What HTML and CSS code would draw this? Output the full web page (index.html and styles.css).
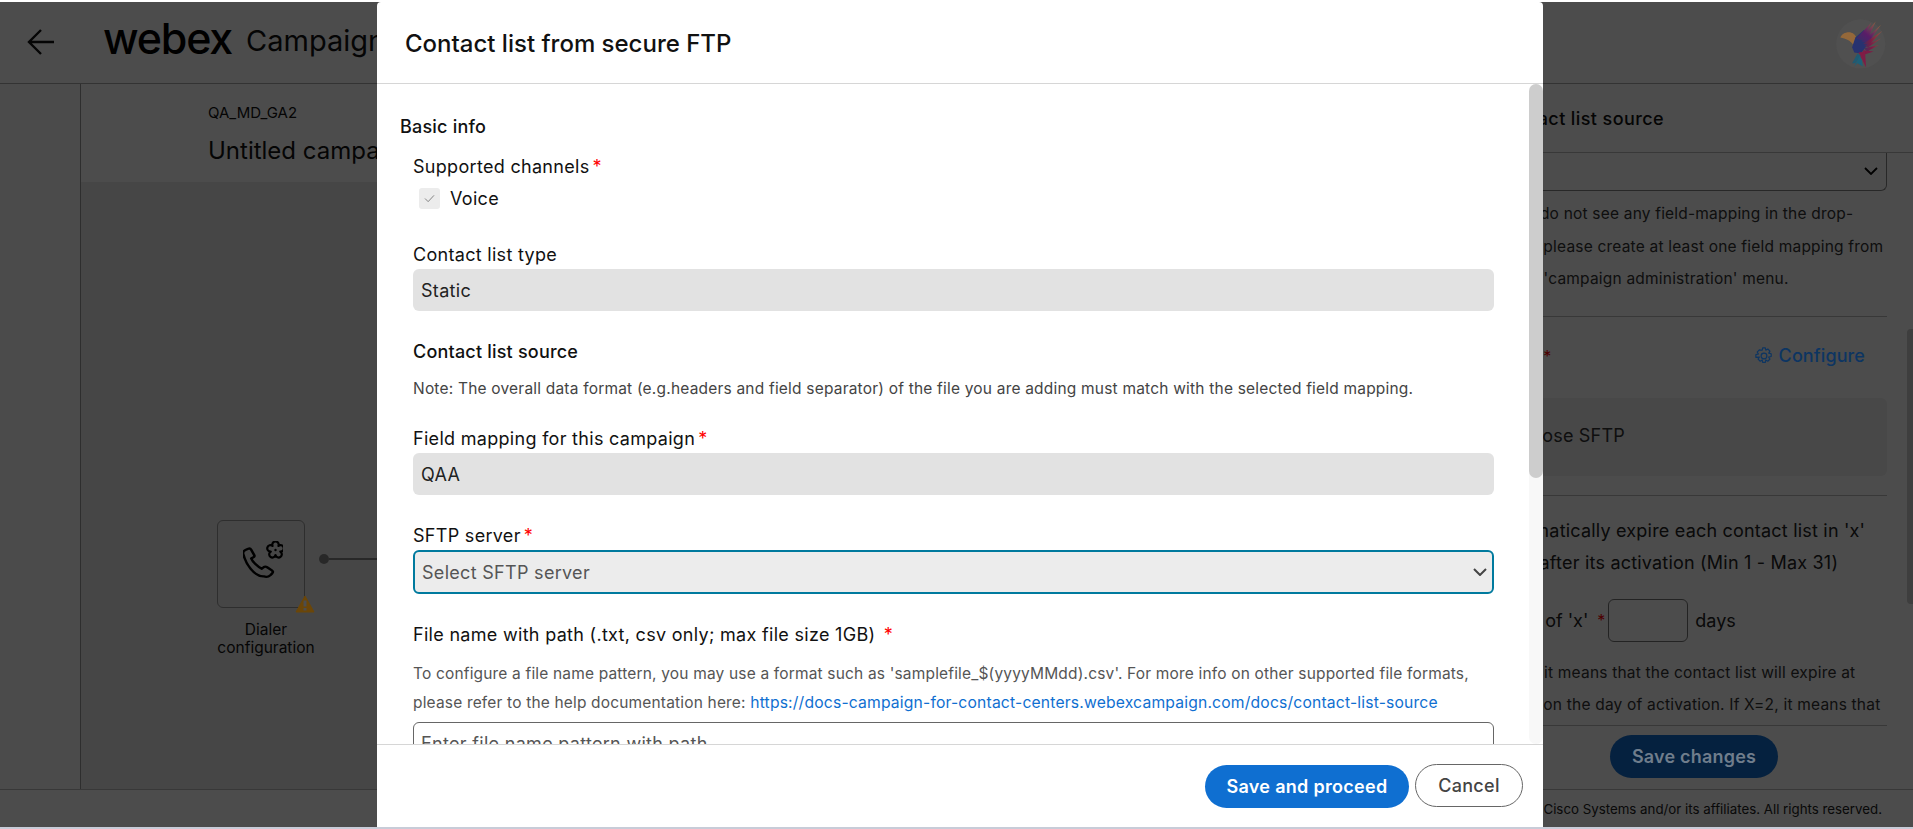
FILE: index.html
```html
<!DOCTYPE html>
<html lang="en">
<head>
  <meta charset="UTF-8" />
  <meta name="viewport" content="width=device-width, initial-scale=1.0"/>
  <title>Contact list from secure FTP</title>
  <link rel="stylesheet" href="styles.css">
</head>
<body>
  <div class="app">
    <header class="topbar">
      <svg class="back-icon" viewBox="0 0 28 28" fill="none" stroke="#111" stroke-width="2.4">
        <path d="M27 14H2M14 2L2 14l12 12"/>
      </svg>
      <span class="logo">webex</span>
      <span class="product">Campaign</span>
      <svg class="avatar" viewBox="4 6 56 60.670">
        <defs>
          <linearGradient id="wing" x1="28" y1="36" x2="46" y2="14" gradientUnits="userSpaceOnUse">
            <stop offset="0" stop-color="#2c3468"/>
            <stop offset="0.45" stop-color="#5a1c68"/>
            <stop offset="1" stop-color="#94663a"/>
          </linearGradient>
          <linearGradient id="lower" x1="28" y1="36" x2="48" y2="34" gradientUnits="userSpaceOnUse">
            <stop offset="0" stop-color="#2c3468"/>
            <stop offset="0.5" stop-color="#7c1c46"/>
            <stop offset="1" stop-color="#8f4f40"/>
          </linearGradient>
        </defs>
        <circle cx="28" cy="33" r="23" fill="#505050"/>
        <path d="M9 27c1-3 4-5 8-5 3 0 6 2 7 5l-3 7c-2-4-7-6-12-7z" fill="#94683a"/>
        <path d="M20 36l3-9 8-7 5 12-8 10-6-1z" fill="#273270"/>
        <path d="M24 28L38 13l-8 17z" fill="url(#wing)"/>
        <path d="M27 29L42 12l-8 18z" fill="url(#wing)"/>
        <path d="M29 31L47 15 35 32z" fill="url(#wing)"/>
        <path d="M30 33L48 21 36 34z" fill="url(#lower)"/>
        <path d="M31 35l16-7-12 8z" fill="url(#lower)"/>
        <path d="M31 37l14-3-11 6z" fill="url(#lower)"/>
        <path d="M30 39l10 1-9 3z" fill="#7c1c46"/>
        <path d="M26 41l6-1 1 15-3-6z" fill="#801c46"/>
        <path d="M25 42l3 2-5 7-3 0z" fill="#1f5a72"/>
        <path d="M27 44l2 4 1 6-5-3-3 3z" fill="#1d6078"/>
      </svg>
    </header>

    <div class="content">
      <div class="rail"></div>

      <main class="workspace">
        <section class="campaign-head">
          <div class="org">QA_MD_GA2</div>
          <div class="campaign-name">Untitled campaign</div>
        </section>
        <section class="canvas">
          <div class="node">
            <div class="node-box">
              <svg class="node-icon" viewBox="0 0 40 40" fill="none" stroke="#000" stroke-width="2.200">
                <path transform="translate(-3 .5) scale(1.18 1.03)" d="M3 13c-1-2 0-4 2-5l2-1c1-.5 2 0 2.500 1l2.500 5c.5 1 0 2-1 2.500l-1.500 1c1 3 5.500 8 9 10l1.500-1.500c1-.8 2-.7 3 0l4 3c1 .8 1 2 .2 3l-1.500 1.800c-1.500 1.500-3.500 2-5.700 1C12 34 5 22 3 13z" stroke-linejoin="round"/>
                <path d="M35.440 4.950A3.200 3.200 0 1 1 37.260 10.550A3.200 3.200 0 1 1 32.500 14A3.200 3.200 0 1 1 27.740 10.550A3.200 3.200 0 1 1 29.560 4.950A3.200 3.200 0 1 1 35.440 4.950z" stroke-linejoin="round"/>
                <circle cx="32.500" cy="9" r="1.200" fill="#000" stroke="none"/>
              </svg>
              <svg class="node-warning" viewBox="0 0 20 18">
                <path d="M10 1l9 16H1z" fill="#6b4608" stroke="#6b4608" stroke-linejoin="round"/>
                <path d="M8.500 5.500h3v6h-3zM8.500 13h3v2.500h-3z" fill="#4d4d4d"/>
              </svg>
            </div>
            <div class="node-label">Dialer<br>configuration</div>
          </div>
          <div class="connector"><span class="connector-dot"></span><span class="connector-line"></span></div>
        </section>
      </main>

      <aside class="panel">
        <h3 class="panel-title">Contact list source</h3>
        <div class="panel-scroll">
          <div class="panel-select">
            <svg class="chevron" viewBox="0 0 14 8" fill="none" stroke="#000" stroke-width="1.8"><path d="M1 1l6 6 6-6"/></svg>
          </div>
          <p class="panel-note first-note">If you do not see any field-mapping in the drop-<br>down, please create at least one field mapping from<br>Under 'campaign administration' menu.</p>
          <hr class="panel-rule">
          <div class="source-row">
            <span class="panel-label">SFTP<span class="req source-req">*</span></span>
            <a class="configure">
              <svg class="gear" viewBox="0 0 20 20" fill="none" stroke="#0d3562" stroke-width="1.300">
                <circle cx="10" cy="10" r="3.200"/>
                <path d="M8.500 1h3l.5 2.600 2.200-1.400 2.400 2.400-1.400 2.200 2.800.7v3l-2.800.7 1.400 2.200-2.400 2.400-2.200-1.400-.5 2.600h-3l-.5-2.600-2.200 1.400-2.400-2.400 1.400-2.200L1 11.500v-3l2.800-.7-1.400-2.200 2.400-2.400L8 3.600z" stroke-linejoin="round"/>
              </svg>
              Configure
            </a>
          </div>
          <div class="source-card">Choose SFTP</div>
          <hr class="panel-rule second-rule">
          <p class="expire-text">Automatically expire each contact list in 'x'<br>days after its activation (Min 1 - Max 31)</p>
          <div class="expire-row">
            <span>Value of 'x'</span><span class="req">*</span>
            <span class="days-input"></span>
            <span>days</span>
          </div>
          <p class="panel-note expire-note">If X=1, it means that the contact list will expire at<br>12 AM on the day of activation. If X=2, it means that</p>
        </div>
        <div class="panel-actions">
          <button class="save-changes">Save changes</button>
        </div>
        <span class="panel-thumb"></span>
      </aside>
    </div>

    <footer class="page-footer">© 2024 Cisco Systems and/or its affiliates. All rights reserved.</footer>
    <div class="backdrop"></div>

    <div class="modal">
      <div class="modal-head">Contact list from secure FTP</div>
      <div class="modal-body">
        <h4 class="section-title">Basic info</h4>
        <div class="group">
          <label class="label">Supported channels<span class="star">*</span></label>
          <div class="check-row">
            <span class="checkbox">
              <svg viewBox="0 0 12 10" fill="none" stroke="#777" stroke-width="1"><path d="M1 5l3.500 3.500L11 1.500"/></svg>
            </span>
            Voice
          </div>
          <div class="field type-field">
            <label class="label">Contact list type</label>
            <div class="input readonly">Static</div>
          </div>
          <h4 class="sub-title">Contact list source</h4>
          <p class="note">Note: The overall data format (e.g.headers and field separator) of the file you are adding must match with the selected field mapping.</p>
          <div class="field mapping-field">
            <label class="label">Field mapping for this campaign<span class="star">*</span></label>
            <div class="input readonly">QAA</div>
          </div>
          <div class="field">
            <label class="label">SFTP server<span class="star">*</span></label>
            <div class="input select-focus">
              Select SFTP server
              <svg class="select-chevron" viewBox="0 0 14 8" fill="none" stroke="#444" stroke-width="2"><path d="M1 1l6 6 6-6"/></svg>
            </div>
          </div>
          <div class="field">
            <label class="label">File name with path (.txt, csv only; max file size 1GB) <span class="star">*</span></label>
            <p class="help">To configure a file name pattern, you may use a format such as 'samplefile_$(yyyyMMdd).csv'. For more info on other supported file formats,<br>please refer to the help documentation here: <a class="doc-link">https://docs-campaign-for-contact-centers.webexcampaign.com/docs/contact-list-source</a></p>
            <div class="input plain">Enter file name pattern with path</div>
          </div>
        </div>
      </div>
      <div class="modal-scrollbar"><span class="modal-thumb"></span></div>
      <div class="modal-foot">
        <button class="btn-primary">Save and proceed</button>
        <button class="btn-cancel">Cancel</button>
      </div>
    </div>
  </div>
</body>
</html>
```

FILE: styles.css
```css
* {
  margin: 0;
  padding: 0;
  box-sizing: border-box;
}

html, body {
  height: 100%;
  overflow: hidden;
}

body {
  font-family: Inter, "Liberation Sans", sans-serif;
  background: #fff;
  color: #000;
  padding-top: 2px;
}

.app {
  position: relative;
  display: flex;
  flex-direction: column;
  height: 827px;
  border-bottom: 2px solid #c8ccd8;
  background: #fff;
}

/* page behind the dialog */
.topbar {
  display: flex;
  align-items: center;
  height: 82px;
  padding: 0 18px 0 27px;
  border-bottom: 1px solid #aaa;
  flex-shrink: 0;
}

.back-icon {
  width: 28px;
  height: 28px;
  margin-top: -2px;
}

.logo {
  margin-left: 48px;
  font-size: 43px;
  font-weight: 500;
  letter-spacing: -1.200px;
  line-height: 1;
  margin-top: -8px;
}

.product {
  margin-left: 14px;
  font-size: 29px;
  margin-top: -5px;
  color: #111;
}

.avatar {
  position: relative;
  z-index: 2;
  width: 60px;
  height: 65px;
  margin-left: auto;
  margin-top: 9px;
}

.content {
  display: flex;
  flex: 1;
  min-height: 0;
}

.rail {
  width: 81px;
  border-right: 1px solid #999;
  background: #fafafa;
}

.workspace {
  flex: 1;
  display: flex;
  flex-direction: column;
  min-width: 0;
}

.campaign-head {
  height: 98px;
  padding: 19px 0 0 127px;
  background: #fff;
}

.org {
  font-size: 15px;
  line-height: 20px;
  color: #111;
}

.campaign-name {
  margin-top: 12px;
  font-size: 24px;
  line-height: 32px;
  color: #111;
}

.canvas {
  position: relative;
  flex: 1;
  background: #eaeaea;
}

.node {
  position: absolute;
  left: 117px;
  top: 338px;
  width: 136px;
  text-align: center;
}

.node-box {
  position: relative;
  width: 88px;
  height: 88px;
  margin-left: 19px;
  border: 1px solid #999;
  border-radius: 6px;
}

.node-icon {
  position: absolute;
  left: 25px;
  top: 20px;
  width: 40px;
  height: 40px;
}

.node-warning {
  position: absolute;
  z-index: 2;
  right: -11px;
  bottom: -6px;
  width: 20px;
  height: 18px;
}

.node-label {
  margin-top: 13px;
  font-size: 15.500px;
  line-height: 18px;
  color: #111;
}

.connector {
  position: absolute;
  left: 238px;
  top: 372px;
  display: flex;
  align-items: center;
  width: 100px;
}

.connector-dot {
  width: 10px;
  height: 10px;
  border-radius: 50%;
  background: #888;
}

.connector-line {
  flex: 1;
  height: 2px;
  background: #888;
}

.panel {
  width: 420px;
  display: flex;
  flex-direction: column;
  background: #fff;
  position: relative;
  flex-shrink: 0;
}

.panel-thumb {
  position: absolute;
  z-index: 2;
  right: 0;
  top: 245px;
  width: 6px;
  height: 275px;
  border-radius: 4px 0 0 4px;
  background: #3e3e3e;
}

.panel-title {
  height: 69px;
  padding: 23px 0 0 2px;
  font-size: 18px;
  line-height: 24px;
  font-weight: 500;
  letter-spacing: 0.400px;
  border-bottom: 1px solid #bbb;
  color: #111;
}

.panel-scroll {
  flex: 1;
  min-height: 0;
  overflow: hidden;
  padding-right: 26px;
}

.panel-select {
  display: flex;
  align-items: center;
  justify-content: flex-end;
  height: 39px;
  margin-top: -1px;
  padding-right: 8px;
  border: 1px solid #888;
  border-top: 0;
  border-radius: 0 0 6px 6px;
}

.chevron {
  width: 14px;
  height: 8px;
}

.panel-note {
  font-size: 15.500px;
  letter-spacing: 0.200px;
  line-height: 32.500px;
  color: #333;
  white-space: nowrap;
}

.first-note {
  margin-top: 7px;
}

.panel-rule {
  margin-top: 20px;
  border: 0;
  border-top: 1px solid #bbb;
}

.source-row {
  display: flex;
  justify-content: space-between;
  align-items: center;
  height: 24px;
  margin-top: 27px;
  padding-right: 22px;
  font-size: 18px;
}

.panel-label {
  color: #111;
}

.req {
  color: #f00;
  font-size: 16px;
}

.source-req {
  margin-left: 5px;
}

.configure {
  position: relative;
  z-index: 2;
  display: flex;
  align-items: center;
  gap: 6px;
  font-size: 18px;
  font-weight: 500;
  letter-spacing: 0.100px;
  color: #0d3562;
}

.gear {
  width: 18px;
  height: 18px;
}

.source-card {
  height: 78px;
  margin-top: 30px;
  padding: 25px 0 0 14px;
  border-radius: 6px;
  background: #f0f0f0;
  font-size: 18px;
  letter-spacing: 0.200px;
  line-height: 26px;
  color: #333;
}

.second-rule {
  margin-top: 19px;
}

.expire-text {
  margin-top: 19px;
  font-size: 18px;
  letter-spacing: 0.200px;
  line-height: 32px;
  color: #222;
  white-space: nowrap;
}

.expire-row {
  display: flex;
  align-items: center;
  height: 43px;
  margin-top: 20px;
  font-size: 18px;
  color: #222;
}

.expire-row .req {
  margin-left: 9px;
}

.days-input {
  width: 80px;
  height: 43px;
  margin: 0 7px 0 3px;
  border: 1px solid #777;
  border-radius: 6px;
  background: #fff;
}

.expire-note {
  margin-top: 15px;
}

.panel-actions {
  display: flex;
  justify-content: flex-start;
  height: 64px;
  margin-right: 26px;
  padding: 9px 0 0 117px;
  border-top: 1px solid #bbb;
}

.save-changes {
  position: relative;
  z-index: 2;
  width: 168px;
  height: 43px;
  border: 0;
  border-radius: 22px;
  background: #05213f;
  color: #6f7d8c;
  font-family: inherit;
  font-size: 18px;
  letter-spacing: 0.200px;
  font-weight: 600;
}

.page-footer {
  height: 38px;
  flex-shrink: 0;
  padding: 9px 31px 0 0;
  border-top: 1px solid #bbb;
  text-align: right;
  font-size: 13.300px;
  line-height: 20px;
  color: #222;
}

.backdrop {
  position: absolute;
  z-index: 1;
  inset: 0;
  background: rgba(0, 0, 0, 0.7);
}

/* dialog */
.modal {
  position: absolute;
  z-index: 3;
  left: 377px;
  top: 0;
  width: 1166px;
  height: 825px;
  display: flex;
  flex-direction: column;
  background: #fff;
  border-radius: 4px 4px 0 0;
}

.modal-head {
  height: 82px;
  flex-shrink: 0;
  padding: 27px 0 0 28px;
  border-bottom: 1px solid #d6d6d6;
  font-size: 24px;
  line-height: 30px;
  font-weight: 500;
  color: #111;
}

.modal-body {
  flex: 1;
  min-height: 0;
  overflow: hidden;
  padding: 31px 49px 0 23px;
}

/* headless chrome hides real scrollbars, so this one is drawn */
.modal-scrollbar {
  position: absolute;
  right: 0;
  top: 82px;
  width: 14px;
  height: 660px;
  border-radius: 7px;
  background: #f8f8f8;
}

.modal-thumb {
  display: block;
  height: 394px;
  border-radius: 7px;
  background: #cdcdcd;
}

.section-title {
  font-size: 18px;
  line-height: 24px;
  font-weight: 500;
  letter-spacing: 0.200px;
  color: #111;
}

.group {
  margin-top: 16px;
  padding-left: 13px;
}

.label {
  display: block;
  font-size: 18px;
  letter-spacing: 0.300px;
  line-height: 24px;
  color: #111;
}

.star {
  margin-left: 3px;
  color: #f00;
}

.check-row {
  display: flex;
  align-items: center;
  gap: 10px;
  height: 21px;
  margin-top: 9px;
  padding-left: 6px;
  font-size: 18px;
  letter-spacing: 0.300px;
  color: #111;
}

.checkbox {
  display: flex;
  align-items: center;
  justify-content: center;
  width: 21px;
  height: 21px;
  border-radius: 3px;
  background: #ececec;
}

.checkbox svg {
  width: 11px;
  height: 9px;
}

.field {
  margin-top: 29px;
}

.type-field {
  margin-top: 34px;
}

.mapping-field {
  margin-top: 28px;
}

.input {
  position: relative;
  display: flex;
  align-items: center;
  height: 42px;
  margin-top: 2px;
  padding: 0 8px;
  border-radius: 6px;
  font-size: 18px;
  letter-spacing: 0.300px;
  color: #222;
}

.readonly {
  background: #e2e2e2;
}

.select-focus {
  justify-content: space-between;
  height: 44px;
  padding: 0 5px 0 7px;
  border: 2px solid #007a9e;
  background: #ececec;
  color: #555;
}

.select-chevron {
  width: 14px;
  height: 8px;
}

.plain {
  margin-top: 5px;
  padding: 0 7px;
  border: 1px solid #666;
  color: #555;
}

.sub-title {
  margin-top: 29px;
  font-size: 18px;
  line-height: 24px;
  font-weight: 500;
  letter-spacing: 0.200px;
  color: #111;
}

.note {
  margin-top: 15px;
  font-size: 15.500px;
  letter-spacing: 0.200px;
  line-height: 20px;
  color: #444;
}

.help {
  margin-top: 12px;
  font-size: 15.500px;
  letter-spacing: 0.170px;
  line-height: 29px;
  color: #555;
  white-space: nowrap;
}

.doc-link {
  font-size: 15.700px;
  color: #0f6fd1;
}

.modal-foot {
  display: flex;
  justify-content: flex-end;
  align-items: center;
  gap: 6px;
  height: 83px;
  flex-shrink: 0;
  padding: 0 20px 0 0;
  border-top: 1px solid #d6d6d6;
  background: #fff;
}

.btn-primary {
  width: 204px;
  height: 43px;
  border: 0;
  border-radius: 22px;
  background: #0f6fd1;
  color: #fff;
  font-family: inherit;
  font-size: 18px;
  letter-spacing: 0.300px;
  font-weight: 600;
}

.btn-cancel {
  width: 108px;
  height: 43px;
  margin-top: -2px;
  border: 1px solid #666;
  border-radius: 22px;
  background: #fff;
  color: #444;
  font-family: inherit;
  font-size: 18px;
  letter-spacing: 0.300px;
  font-weight: 500;
}
```
